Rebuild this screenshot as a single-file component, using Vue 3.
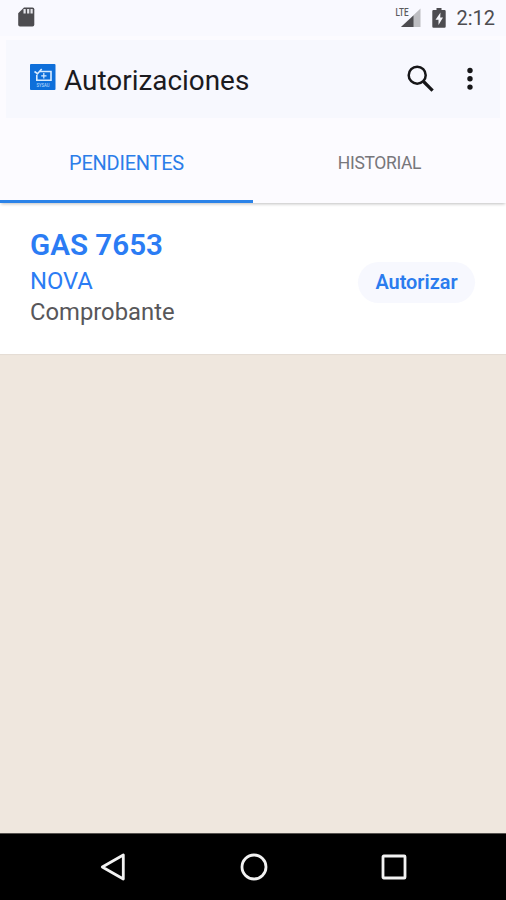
<template>
  <div class="screen">
    <header class="status-bar">
      <svg class="sd-card" width="18" height="20" viewBox="0 0 18 20">
        <path d="M6 0.5h8.500a1.800 1.800 0 0 1 1.800 1.800v15.400a1.800 1.800 0 0 1-1.800 1.800H2a1.800 1.800 0 0 1-1.800-1.800V6.200z" fill="#4d4c50" />
        <path d="M6.600 2v4.500M10.200 2v4.500M13.600 2v4.500" stroke="#e4e4e9" stroke-width="2.200" />
      </svg>
      <div class="status-right">
        <svg class="signal" width="26" height="22" viewBox="0 0 26 22">
          <path d="M25.500 1.500v18.500H6z" fill="#bdbdc1" />
          <path d="M18.500 8.500v11.500H6z" fill="#4d4c50" />
          <text x="0.500" y="9" textLength="13" lengthAdjust="spacingAndGlyphs">LTE</text>
        </svg>
        <svg class="battery" width="14" height="20" viewBox="0 0 14 20">
          <path d="M4.500 0h5v2h3a1.200 1.200 0 0 1 1.200 1.200v15.300a1.200 1.200 0 0 1-1.200 1.200h-11A1.200 1.200 0 0 1 .3 18.500V3.200A1.200 1.200 0 0 1 1.500 2h3z" fill="#4d4c50" />
          <path d="M8.500 4.500 3.500 11.800h3v5.200l4.500-7.500H8.200z" fill="#f5f5fa" />
        </svg>
        <span class="clock">2:12</span>
      </div>
    </header>

    <div class="toolbar">
      <svg class="logo" width="26" height="26" viewBox="0 0 26 26">
        <rect width="25.500" height="26" rx="1" fill="#0e6fda" />
        <path d="M10 7.500h11v8.700H6.800v-5.500M4.500 7.500l3 2.200 4.200-4.700" fill="none" stroke="#d9ecff" stroke-width="1.600" />
        <path d="M13.800 9v5.500M11.200 11.800h5.300" stroke="#d9ecff" stroke-width="1.200" />
        <text x="6.500" y="22.800" textLength="13" lengthAdjust="spacingAndGlyphs">SYSAU</text>
      </svg>
      <h1 class="title">Autorizaciones</h1>
      <button class="icon-btn search" aria-label="Buscar">
        <svg width="28" height="28" viewBox="0 0 28 28" fill="none" stroke="#161618">
          <circle cx="10.200" cy="10.200" r="8.500" stroke-width="2.500" />
          <path d="M16.500 16.500l9.100 9.100" stroke-width="3.200" />
        </svg>
      </button>
      <button class="icon-btn" aria-label="Más opciones">
        <svg width="6" height="24" viewBox="0 0 6 24" fill="#161618">
          <circle cx="3" cy="3.500" r="2.700" />
          <circle cx="3" cy="11.800" r="2.700" />
          <circle cx="3" cy="20.100" r="2.700" />
        </svg>
      </button>
    </div>

    <nav class="tabs">
      <button
        v-for="tab in tabs"
        :key="tab"
        class="tab"
        :class="{ active: tab === activeTab }"
        @click="activeTab = tab"
      >{{ tab }}</button>
    </nav>

    <main class="content">
      <article v-for="item in items" :key="item.code" class="card">
        <div class="info">
          <h2 class="code">{{ item.code }}</h2>
          <p class="company">{{ item.company }}</p>
          <p class="kind">{{ item.kind }}</p>
        </div>
        <button class="authorize">Autorizar</button>
      </article>
    </main>

    <footer class="nav-bar">
      <svg width="30" height="30" viewBox="0 0 30 30">
        <path d="M25.300 3v24L4.300 15z" />
      </svg>
      <svg width="30" height="30" viewBox="0 0 30 30">
        <circle cx="15" cy="15" r="12" />
      </svg>
      <svg width="30" height="30" viewBox="0 0 30 30">
        <rect x="4" y="4" width="22" height="22" rx="0.800" />
      </svg>
    </footer>
  </div>
</template>

<script setup>
import { ref } from 'vue'

const tabs = ['PENDIENTES', 'HISTORIAL']
const activeTab = ref('PENDIENTES')

const items = ref([
  { code: 'GAS 7653', company: 'NOVA', kind: 'Comprobante' },
])
</script>

<style>
body { margin: 0; }
</style>

<style scoped>
.screen {
  display: flex;
  flex-direction: column;
  height: 900px;
  background: #fcfbff;
  font-family: Roboto, "Liberation Sans", sans-serif;
  overflow: hidden;
}
button {
  border: none;
  background: none;
  padding: 0;
  font-family: inherit;
  cursor: pointer;
}
svg { display: block; }
h1, h2, p { margin: 0; }

.status-bar {
  display: flex;
  justify-content: space-between;
  box-sizing: border-box;
  height: 36px;
  padding: 7px 11px 0 18px;
  background: #f9f9ff;
}
.status-right { display: flex; }
.signal text { font-size: 11px; font-weight: 500; fill: #5a595d; }
.battery { margin: 1px 10px 0 11px; }
.clock {
  font-size: 20px;
  line-height: 23px;
  color: #4d4c50;
}

.toolbar {
  display: flex;
  align-items: center;
  box-sizing: border-box;
  height: 78px;
  margin: 4px 6px 0;
  padding: 0 27px 0 24px;
  background: #f7f8fe;
}
.logo { margin: -4px 8px 0 0; }
.logo text { font-size: 5px; font-weight: 500; fill: #a9d2fb; }
.title {
  flex: 1;
  font-size: 27.900px;
  font-weight: 400;
  line-height: 36px;
  margin-top: 4px;
  color: #1b1b1f;
}
.search { margin-right: 32px; }

.tabs {
  display: flex;
  position: relative;
  height: 85px;
  box-shadow: 0 2px 3px -1px rgba(0, 0, 0, 0.25);
}
.tab {
  flex: 1;
  box-sizing: border-box;
  padding-top: 8px;
  border-bottom: 3px solid transparent;
  font-size: 17.500px;
  letter-spacing: -0.350px;
  color: #77767b;
}
.tab.active {
  font-size: 20px;
  letter-spacing: -0.250px;
  color: #2b7de9;
  border-color: #2b83e8;
}

.content {
  flex: 1;
  background: #efe7de;
}
.card {
  display: flex;
  justify-content: space-between;
  box-sizing: border-box;
  height: 151px;
  padding: 24px 31px 0 30px;
  background: #fff;
  box-shadow: 0 1px 1px rgba(0, 0, 0, 0.04);
}
.code {
  font-size: 29.600px;
  font-weight: 600;
  line-height: 36px;
  color: #2b7cf4;
}
.company {
  font-size: 23.800px;
  line-height: 37px;
  color: #2b7cf4;
}
.kind {
  font-size: 23.800px;
  line-height: 25px;
  color: #58575a;
}
.authorize {
  width: 117px;
  height: 41px;
  margin-top: 35px;
  padding-bottom: 1px;
  border-radius: 21px;
  background: #f7f8fe;
  font-size: 19.900px;
  font-weight: 600;
  color: #2b7cee;
}

.nav-bar {
  display: flex;
  justify-content: space-between;
  align-items: center;
  box-sizing: border-box;
  height: 67px;
  padding: 0 97px 0 98px;
  border-top: 1px solid #55524f;
  background: #000;
}
.nav-bar svg {
  margin-top: -1px;
  fill: none;
  stroke: #f2f2f2;
  stroke-width: 2.800;
  stroke-linejoin: round;
}
</style>
